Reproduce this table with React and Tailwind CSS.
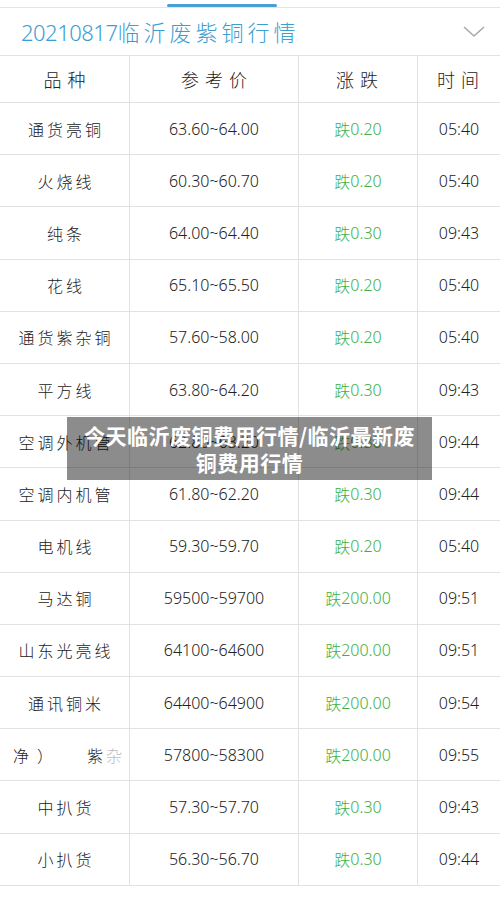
import React from "react";

const rows = [
  ["通货亮铜", "63.60~64.00", "0.20", "05:40"],
  ["火烧线", "60.30~60.70", "0.20", "05:40"],
  ["纯条", "64.00~64.40", "0.30", "09:43"],
  ["花线", "65.10~65.50", "0.20", "05:40"],
  ["通货紫杂铜", "57.60~58.00", "0.20", "05:40"],
  ["平方线", "63.80~64.20", "0.30", "09:43"],
  ["空调外机管", "62.80~63.20", "0.30", "09:44"],
  ["空调内机管", "61.80~62.20", "0.30", "09:44"],
  ["电机线", "59.30~59.70", "0.20", "05:40"],
  ["马达铜", "59500~59700", "200.00", "09:51"],
  ["山东光亮线", "64100~64600", "200.00", "09:51"],
  ["通讯铜米", "64400~64900", "200.00", "09:54"],
  [null, "57800~58300", "200.00", "09:55"],
  ["中扒货", "57.30~57.70", "0.30", "09:43"],
  ["小扒货", "56.30~56.70", "0.30", "09:44"],
];

const cjk = { fontFamily: '"Noto Sans CJK SC", "Noto Sans", sans-serif' };
const num = { fontFamily: '"Noto Sans", "Open Sans", sans-serif' };

export default function App() {
  return (
    <div className="relative w-[500px] h-[897px] bg-white overflow-hidden" style={cjk}>
      {/* top tab strip */}
      <div className="h-[8px] pt-[4px] border-b border-[#e4e4e4]">
        <div className="ml-[167px] w-[110px] h-[3px] bg-[#4a9fd6] rounded-full" />
      </div>
      {/* title */}
      <div className="h-[48px] flex items-center justify-between pl-[21px] pr-[10px] border-b border-[#e2e2e2]">
        <div className="text-[#3d9dcf] text-[22px] leading-none font-light">
          <span style={num} className="tracking-[-0.5px]">20210817</span>
          <span className="tracking-[4px]">临沂废紫铜行情</span>
        </div>
        <svg width="24" height="14" viewBox="0 0 24 14" className="mr-[4px]">
          <path d="M2 2 L12 11 L22 2" fill="none" stroke="#a9a9a9" strokeWidth="1.6" />
        </svg>
      </div>
      {/* header */}
      <div className="grid grid-cols-[130px_169px_119px_82px] h-[47px] border-b border-[#e2e2e2] text-[18px] text-[#222] font-light">
        <div className="flex items-center justify-center border-r border-[#e2e2e2] tracking-[6px] pl-[6px]">品种</div>
        <div className="flex items-center justify-center border-r border-[#e2e2e2] tracking-[6px] pl-[6px]">参考价</div>
        <div className="flex items-center justify-center border-r border-[#e2e2e2] tracking-[6px] pl-[4px]">涨跌</div>
        <div className="flex items-center justify-center tracking-[6px] pl-[4px]">时间</div>
      </div>
      {/* rows */}
      {rows.map((r, i) => (
        <div
          key={i}
          className="grid grid-cols-[130px_169px_119px_82px] h-[52.2px] border-b border-[#e2e2e2] text-[#222] font-light"
        >
          <div className="flex items-center justify-center border-r border-[#e2e2e2] text-[16px]">
            {r[0] ? (
              <span className="tracking-[3px] pl-[3px]">{r[0]}</span>
            ) : (
              <div className="w-full flex items-center justify-between pl-[13px] pr-[4px]">
                <span className="tracking-[8px]">净）</span>
                <span className="tracking-[3px]">
                  紫<span className="text-[#bbb]">杂</span>
                </span>
              </div>
            )}
          </div>
          <div className="flex items-center justify-center border-r border-[#e2e2e2] text-[16px]" style={num}>
            {r[1]}
          </div>
          <div className="flex items-center justify-center border-r border-[#e2e2e2] text-[16px] text-[#40b045]">
            <span>跌</span>
            <span style={num}>{r[2]}</span>
          </div>
          <div className="flex items-center justify-center text-[16px]" style={num}>
            {r[3]}
          </div>
        </div>
      ))}
      {/* overlay caption */}
      <div className="absolute left-[67px] top-[417px] w-[365px] h-[63px] bg-black/45 flex items-center justify-center px-[10px]">
        <p className="text-white text-[21px] font-bold leading-[27px] text-center tracking-[0.5px]">
          今天临沂废铜费用行情/临沂最新废铜费用行情
        </p>
      </div>
    </div>
  );
}
